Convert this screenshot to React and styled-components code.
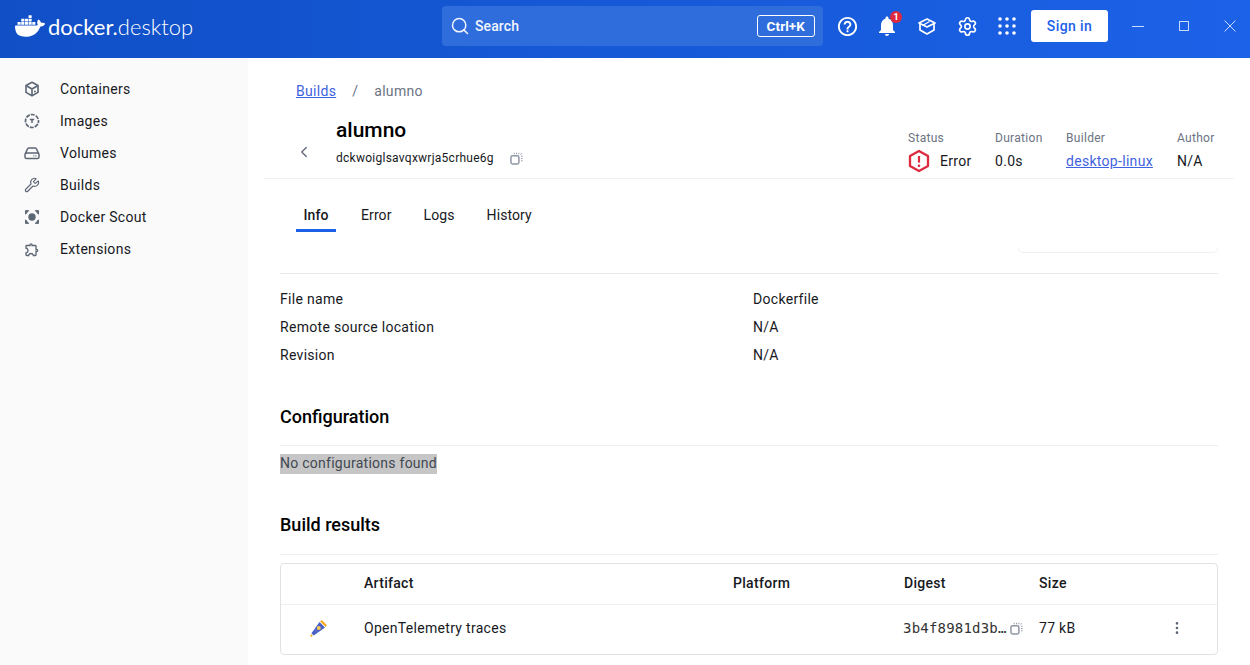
import React from "react";
import styled, { createGlobalStyle } from "styled-components";
import { SiDocker } from "react-icons/si";
import { MdNotifications, MdOutlineHelpOutline, MdOutlineExtension } from "react-icons/md";
import { Search, Settings, Wrench, ChevronLeft, EllipsisVertical } from "lucide-react";

const Global = createGlobalStyle`
  html, body { margin: 0; padding: 0; height: 100%; overflow: hidden; background: #fff; }
  body { font-family: Roboto, "Liberation Sans", sans-serif; font-size: 14px; color: #17191e; letter-spacing: 0.3px; }
  * { box-sizing: border-box; }
`;

const Page = styled.div`
  width: 1250px;
  height: 665px;
  display: flex;
  flex-direction: column;
  overflow: hidden;
`;

const Header = styled.header`
  height: 58px;
  flex: none;
  padding-bottom: 6px;
  display: flex;
  align-items: center;
  background: linear-gradient(90deg, #104fc6 0%, #1c62e8 100%);
  color: #fff;
`;

const Logo = styled.div`
  width: 442px;
  padding-left: 15px;
  display: flex;
  align-items: center;
  gap: 3px;
  flex: none;
`;

const LogoText = styled.span`
  font-family: Lato, sans-serif;
  font-size: 22px;
  font-weight: 400;
  letter-spacing: 0;
  b { font-weight: 400; }
  i { font-style: normal; font-weight: 300; }
`;

const SearchBox = styled.div`
  width: 381px;
  height: 40px;
  flex: none;
  border-radius: 4px;
  background: #2f6ddd;
  display: flex;
  align-items: center;
  padding: 0 8px;
  gap: 5px;
  font-weight: 500;
  color: #f2f6fd;
  letter-spacing: 0.1px;
`;

const Kbd = styled.span`
  margin-left: auto;
  height: 22px;
  padding: 0 9px;
  border: 1px solid #fff;
  border-radius: 3px;
  font-size: 13.5px;
  font-weight: 700;
  line-height: 20px;
  color: #fff;
`;

const HeaderIcons = styled.div`
  display: flex;
  align-items: center;
  flex: none;
  margin-left: 4px;
`;

const HeaderIcon = styled.span`
  position: relative;
  width: 40px;
  height: 40px;
  display: flex;
  align-items: center;
  justify-content: center;
`;

const Badge = styled.span`
  position: absolute;
  top: 5px;
  left: 23px;
  width: 12px;
  height: 12px;
  border-radius: 50%;
  background: #dd2a3f;
  color: #fff;
  font-size: 9px;
  font-weight: 700;
  line-height: 12px;
  text-align: center;
  letter-spacing: 0;
`;

const SignIn = styled.button`
  width: 77px;
  height: 32px;
  flex: none;
  margin-left: 4px;
  border: 0;
  border-radius: 3px;
  background: #fff;
  color: #1c62e8;
  font-family: inherit;
  font-size: 14px;
  font-weight: 500;
  letter-spacing: 0.4px;
`;

const WindowControls = styled.div`
  display: flex;
  flex: none;
  margin-left: 7px;
`;

const WindowButton = styled.span`
  width: 46px;
  height: 40px;
  display: flex;
  align-items: center;
  justify-content: center;
  color: #c9d9f8;
`;

const Body = styled.div`
  flex: 1;
  display: flex;
  min-height: 0;
`;

const Sidebar = styled.nav`
  width: 248px;
  flex: none;
  background: #fafafa;
  padding-top: 15px;
`;

const NavItem = styled.div`
  height: 32px;
  display: flex;
  align-items: center;
  padding-left: 24px;
  gap: 20px;
  color: #17191e;
`;

const NavIcon = styled.span`
  width: 16px;
  height: 16px;
  display: flex;
  align-items: center;
  justify-content: center;
  color: #5d6675;
`;

const Main = styled.main`
  flex: 1;
  min-width: 0;
  padding: 0 16px;
  display: flex;
  flex-direction: column;
`;

const Top = styled.div`
  height: 121px;
  flex: none;
  border-bottom: 1px solid #f0f1f2;
`;

const Crumbs = styled.div`
  padding: 20px 0 0 32px;
  height: 46px;
  display: flex;
  align-items: center;
  color: #6b7382;
`;

const CrumbLink = styled.a`
  color: #3f63e0;
  text-decoration: underline;
`;

const CrumbSep = styled.span`
  margin: 0 16px;
`;

const TitleRow = styled.div`
  display: flex;
  align-items: flex-start;
  height: 75px;
`;

const Back = styled.span`
  width: 72px;
  padding: 39px 0 0 31px;
  color: #5d6675;
  flex: none;
`;

const TitleBlock = styled.div`
  padding-top: 13px;
  flex: none;
`;

const Title = styled.h1`
  margin: 0;
  font-size: 21px;
  line-height: 26px;
  font-weight: 500;
  letter-spacing: 0;
  color: #000;
`;

const IdRow = styled.div`
  margin-top: 7px;
  display: flex;
  align-items: center;
  gap: 16px;
  font-size: 12px;
  line-height: 16px;
  letter-spacing: 0.26px;
`;

const Meta = styled.div`
  margin-left: auto;
  padding: 26px 20px 0 0;
  display: flex;
  align-items: flex-start;
`;

const MetaCol = styled.div`
  width: ${(p) => p.$w}px;
  flex: none;
`;

const MetaLabel = styled.div`
  font-size: 12px;
  line-height: 16px;
  color: #6b7382;
`;

const MetaValue = styled.div`
  margin-top: 3px;
  height: 24px;
  display: flex;
  align-items: center;
  gap: 10px;
`;

const MetaLink = styled.a`
  color: #3f63e0;
  text-decoration: underline;
`;

const Tabs = styled.div`
  height: 54px;
  flex: none;
  padding: 12px 0 0 32px;
  display: flex;
  letter-spacing: 0.1px;
`;

const Tab = styled.div`
  height: 41px;
  padding-top: 16px;
  width: ${(p) => (p.$active ? "40px" : "auto")};
  padding-left: ${(p) => (p.$active ? "0" : "8px")};
  padding-right: ${(p) => (p.$active ? "0" : "8px")};
  margin-right: ${(p) => (p.$active ? 17 : 16)}px;
  text-align: center;
  border-bottom: 3px solid ${(p) => (p.$active ? "#1c62e8" : "transparent")};
  font-weight: ${(p) => (p.$active ? 500 : 400)};
`;

const Scroll = styled.div`
  flex: 1;
  min-height: 0;
  margin: 0 16px 0;
  overflow: hidden;
  display: flex;
  flex-direction: column;
`;

const CardEnd = styled.div`
  align-self: flex-end;
  width: 200px;
  height: 5px;
  margin-top: 15px;
  flex: none;
  border: 1px solid #f0f1f2;
  border-top: 0;
  border-radius: 0 0 5px 5px;
`;

const Rows = styled.div`
  margin-top: 20px;
  padding-top: 11px;
  border-top: 1px solid #e9eaec;
`;

const InfoRow = styled.div`
  height: 28px;
  display: grid;
  grid-template-columns: 473px 1fr;
  align-items: center;
`;

const Heading = styled.h2`
  margin: ${(p) => p.$top}px 0 0;
  padding-bottom: ${(p) => p.$bottom}px;
  font-size: 18px;
  line-height: 24px;
  font-weight: 500;
  letter-spacing: 0;
  border-bottom: 1px solid #eeeff0;
  color: #000;
`;

const Empty = styled.div`
  margin-top: 8px;
  height: 20px;
  color: #414853;
`;

const Selected = styled.span`
  display: inline-block;
  height: 20px;
  line-height: 18px;
  letter-spacing: 0.26px;
  background: #c6c6c6;
`;

const Table = styled.div`
  margin-top: 8px;
  height: 92px;
  flex: none;
  border: 1px solid #e1e2e6;
  border-radius: 4px;
`;

const TableRow = styled.div`
  display: grid;
  grid-template-columns: 83px 369px 171px 135px 1fr;
  align-items: center;
  height: ${(p) => p.$h}px;
  padding-bottom: ${(p) => (p.$head ? 3 : 0)}px;
  border-bottom: ${(p) => (p.$head ? "1px solid #f0f1f2" : "0")};
  font-weight: ${(p) => (p.$head ? 500 : 400)};
`;

const ArtifactIcon = styled.span`
  display: flex;
  justify-content: center;
  padding-right: 8px;
`;

const DigestCell = styled.span`
  display: flex;
  align-items: center;
  gap: 3px;
  margin-left: -1px;
  font-family: "DejaVu Sans Mono", monospace;
  font-size: 14px;
  letter-spacing: 0.2px;
  color: #333;
`;

const SizeCell = styled.span`
  display: flex;
  align-items: center;
  justify-content: space-between;
  padding-right: 32px;
  color: #5d6675;
`;

const SizeText = styled.span`
  color: #17191e;
`;

function Cube() {
  return (
    <svg width="16" height="16" viewBox="0 0 16 16" fill="none" stroke="currentColor" strokeWidth="1.6" strokeLinejoin="round">
      <path d="M8 1.2 14 4.5V11.4L8 14.8 2 11.4V4.5Z" />
      <path d="M2.4 4.8 8 8l5.6-3.2M8 8v6.4" />
      <path d="M10 10.5h1.8" strokeWidth="1.3" />
    </svg>
  );
}

function Dashed() {
  return (
    <svg width="16" height="16" viewBox="0 0 16 16" fill="none" stroke="currentColor" strokeWidth="1.7">
      <circle cx="8" cy="8" r="6.5" strokeDasharray="4 1.1" strokeDashoffset="2" />
      <path d="M5.8 6.4h4.4M8 6.4v3.6" strokeWidth="1.5" />
    </svg>
  );
}

function Drive() {
  return (
    <svg width="16" height="16" viewBox="0 0 16 16" fill="none" stroke="currentColor" strokeWidth="1.5">
      <path d="M1.5 8.6 3.4 4a1.5 1.5 0 0 1 1.4-1h6.4a1.5 1.5 0 0 1 1.4 1l1.9 4.6" />
      <rect x="1" y="8" width="14" height="5.6" rx="1.6" />
      <path d="M9.5 10.8h.8M11.5 10.8h.8" />
    </svg>
  );
}

function Scout() {
  return (
    <svg width="16" height="16" viewBox="0 0 16 16" fill="currentColor">
      <circle cx="8" cy="8" r="3.7" />
      <path d="M1 5.6V1.2L5.2 1 3.8 3.4 3 3.6 2.8 4.8ZM15 5.6V1.2L10.8 1l1.4 2.4.8.2.2 1.2ZM1 10.4v4.4l4.2.2-1.4-2.4-.8-.2-.2-1.2ZM15 10.4v4.4l-4.2.2 1.4-2.4.8-.2.2-1.2Z" />
    </svg>
  );
}

function Learn() {
  return (
    <svg width="20" height="20" viewBox="0 0 20 20" fill="none" stroke="currentColor" strokeWidth="1.7" strokeLinejoin="round">
      <path d="M10 3 18 7 10 11 2 7Z" />
      <path d="M3 7.5V14L10 18 17 14V7.5" />
      <path d="M5.5 9.5 12.5 5.5" strokeWidth="1.2" />
    </svg>
  );
}

function Dots() {
  const spots = [2, 9, 16];
  return (
    <svg width="18" height="18" viewBox="0 0 18 18" fill="currentColor">
      {spots.map((y) => spots.map((x) => <circle key={`${x}-${y}`} cx={x} cy={y} r="1.8" />))}
    </svg>
  );
}

function Copy({ size = 13 }) {
  return (
    <svg width={size} height={size} viewBox="0 0 14 14" fill="none" stroke="#8f96a3" strokeWidth="1.6">
      <rect x="1" y="4" width="8.6" height="8.8" rx="1.8" />
      <path d="M4 1.5h1M6.5 1.5h1M9 1.5h1M11.5 1.8l.8.6M12.7 4v1M12.7 6.5v1M12.7 9v1" />
    </svg>
  );
}

function ErrorHex() {
  return (
    <svg width="22" height="24" viewBox="0 0 22 24" fill="none">
      <path d="M11 2 20 7V17L11 22 2 17V7Z" stroke="#dd2a3f" strokeWidth="2.3" strokeLinejoin="round" />
      <path d="M11 7v6.6" stroke="#dd2a3f" strokeWidth="2.2" />
      <circle cx="11" cy="16.8" r="1.3" fill="#dd2a3f" />
    </svg>
  );
}

function Telescope() {
  return (
    <svg width="17" height="17" viewBox="0 0 17 17" fill="none">
      <path d="M9.5 2 15 7.5 8 12.5 4.5 9Z" fill="#4a5fc4" />
      <path d="M11 .8 16.2 6" stroke="#f6a81c" strokeWidth="2.2" />
      <path d="M4.6 9 8 12.4 3.8 15.6 1.4 13.2Z" fill="#4a5fc4" />
      <circle cx="8.8" cy="8" r="2" fill="#f9c95c" />
      <path d="M.6 14.8 2.2 16.4" stroke="#f6a81c" strokeWidth="1.6" />
    </svg>
  );
}

const nav = [
  { label: "Containers", icon: <Cube /> },
  { label: "Images", icon: <Dashed /> },
  { label: "Volumes", icon: <Drive /> },
  { label: "Builds", icon: <Wrench size={16} strokeWidth={1.7} /> },
  { label: "Docker Scout", icon: <Scout /> },
  { label: "Extensions", icon: <MdOutlineExtension size={19} /> },
];

export default function App() {
  return (
    <Page>
      <Global />
      <Header>
        <Logo>
          <SiDocker size={30} />
          <LogoText>
            <b>docker</b>.<i>desktop</i>
          </LogoText>
        </Logo>
        <SearchBox>
          <Search size={20} strokeWidth={1.8} />
          Search
          <Kbd>Ctrl+K</Kbd>
        </SearchBox>
        <HeaderIcons>
          <HeaderIcon><MdOutlineHelpOutline size={23} /></HeaderIcon>
          <HeaderIcon>
            <MdNotifications size={24} />
            <Badge>1</Badge>
          </HeaderIcon>
          <HeaderIcon><Learn /></HeaderIcon>
          <HeaderIcon><Settings size={21} strokeWidth={1.9} /></HeaderIcon>
          <HeaderIcon><Dots /></HeaderIcon>
        </HeaderIcons>
        <SignIn>Sign in</SignIn>
        <WindowControls>
          <WindowButton>
            <svg width="12" height="12" viewBox="0 0 12 12" stroke="currentColor"><path d="M0 6.5h12" /></svg>
          </WindowButton>
          <WindowButton>
            <svg width="12" height="12" viewBox="0 0 12 12" fill="none" stroke="currentColor"><rect x="1.5" y="1.5" width="9" height="9" /></svg>
          </WindowButton>
          <WindowButton>
            <svg width="12" height="12" viewBox="0 0 12 12" stroke="currentColor"><path d="M0.5.5l11 11M11.5.5l-11 11" /></svg>
          </WindowButton>
        </WindowControls>
      </Header>
      <Body>
        <Sidebar>
          {nav.map((n) => (
            <NavItem key={n.label}>
              <NavIcon>{n.icon}</NavIcon>
              {n.label}
            </NavItem>
          ))}
        </Sidebar>
        <Main>
          <Top>
            <Crumbs>
              <CrumbLink>Builds</CrumbLink>
              <CrumbSep>/</CrumbSep>
              alumno
            </Crumbs>
            <TitleRow>
              <Back><ChevronLeft size={18} strokeWidth={1.7} /></Back>
              <TitleBlock>
                <Title>alumno</Title>
                <IdRow>
                  dckwoiglsavqxwrja5crhue6g
                  <Copy />
                </IdRow>
              </TitleBlock>
              <Meta>
                <MetaCol $w={87}>
                  <MetaLabel>Status</MetaLabel>
                  <MetaValue><ErrorHex /> Error</MetaValue>
                </MetaCol>
                <MetaCol $w={71}>
                  <MetaLabel>Duration</MetaLabel>
                  <MetaValue>0.0s</MetaValue>
                </MetaCol>
                <MetaCol $w={111}>
                  <MetaLabel>Builder</MetaLabel>
                  <MetaValue><MetaLink>desktop-linux</MetaLink></MetaValue>
                </MetaCol>
                <MetaCol $w={37}>
                  <MetaLabel>Author</MetaLabel>
                  <MetaValue>N/A</MetaValue>
                </MetaCol>
              </Meta>
            </TitleRow>
          </Top>
          <Tabs>
            <Tab $active>Info</Tab>
            <Tab>Error</Tab>
            <Tab>Logs</Tab>
            <Tab>History</Tab>
          </Tabs>
          <Scroll>
            <CardEnd />
            <Rows>
              <InfoRow><span>File name</span><span>Dockerfile</span></InfoRow>
              <InfoRow><span>Remote source location</span><span>N/A</span></InfoRow>
              <InfoRow><span>Revision</span><span>N/A</span></InfoRow>
            </Rows>
            <Heading $top={36} $bottom={16}>Configuration</Heading>
            <Empty><Selected>No configurations found</Selected></Empty>
            <Heading $top={39} $bottom={17}>Build results</Heading>
            <Table>
              <TableRow $h={41} $head>
                <span />
                <span>Artifact</span>
                <span>Platform</span>
                <span>Digest</span>
                <span>Size</span>
              </TableRow>
              <TableRow $h={46}>
                <ArtifactIcon><Telescope /></ArtifactIcon>
                <span>OpenTelemetry traces</span>
                <span />
                <DigestCell>3b4f8981d3b…<Copy /></DigestCell>
                <SizeCell>
                  <SizeText>77 kB</SizeText>
                  <EllipsisVertical size={16} />
                </SizeCell>
              </TableRow>
            </Table>
          </Scroll>
        </Main>
      </Body>
    </Page>
  );
}
